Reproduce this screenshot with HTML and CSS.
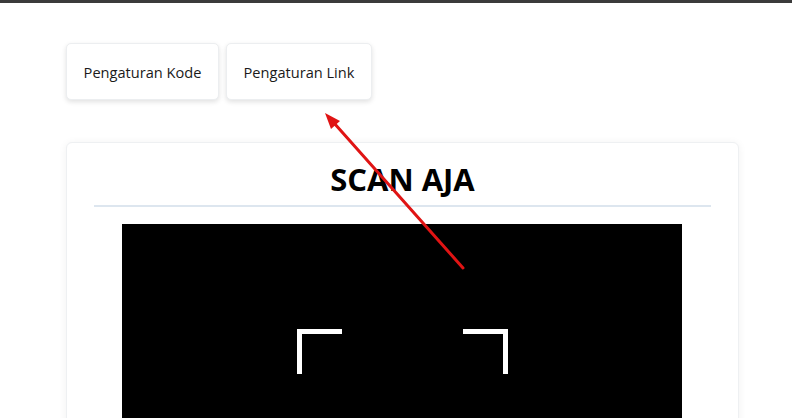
FILE: index.html
```html
<!DOCTYPE html>
<html>
<head>
<meta charset="utf-8">
<link rel="stylesheet" href="styles.css">
</head>
<body>
<div class="topbar"></div>
<main class="page">
  <nav class="tabs">
    <button class="tab">Pengaturan Kode</button>
    <button class="tab">Pengaturan Link</button>
  </nav>
  <section class="card">
    <h1 class="title">SCAN AJA</h1>
    <div class="scanner">
      <div class="qrbox">
        <span class="corner tl"></span>
        <span class="corner tr"></span>
      </div>
    </div>
  </section>
</main>
<svg class="annot" width="792" height="418" viewBox="0 0 792 418">
  <line x1="463" y1="268" x2="334" y2="123" stroke="#e01414" stroke-width="3" stroke-linecap="round"/>
  <polygon points="325,113 340,121 331,129" fill="#e01414"/>
</svg>
</body>
</html>
```
FILE: styles.css
```css
html, body { margin: 0; padding: 0; background: #fff; overflow: hidden; }
body { font-family: "Open Sans", "Noto Sans", sans-serif; color: #1a1a1a; width: 792px; height: 418px; position: relative; }
.topbar { height: 3px; background: #3b3b3b; }
.page { padding: 40px 0 0 66px; width: 673px; }
.tabs { display: flex; gap: 7px; }
.tab {
  font-family: "Open Sans", "Noto Sans", sans-serif;
  font-size: 14.6px; color: #1a1a1a;
  background: #fff; border: 1px solid #eceef0; border-radius: 5px;
  height: 57px; padding: 0 10px;
  box-shadow: 0 2px 5px rgba(0,0,0,0.12);
}
.tab:first-child { width: 153px; }
.tab:last-child { width: 146px; }
.card {
  margin-top: 42px; background: #fff; border-radius: 6px;
  border: 1px solid #eef0f2;
  box-shadow: 0 1px 8px rgba(0,0,0,0.06);
  padding: 0 27px 20px; height: 290px;
}
.title {
  margin: 0; padding: 20px 0 10px; text-align: center;
  font-size: 31px; font-weight: 700; color: #000; line-height: 32px;
  border-bottom: 2px solid #dde6ef;
}
.scanner { margin: 17px 0 0 28px; width: 560px; height: 220px; background: #000; position: relative; }
.qrbox { position: absolute; left: 175px; top: 105px; width: 211px; height: 80px; }
.corner { position: absolute; width: 40px; height: 40px; border: 0 solid #fff; }
.corner.tl { left: 0; top: 0; border-left-width: 5px; border-top-width: 5px; }
.corner.tr { right: 0; top: 0; border-right-width: 5px; border-top-width: 5px; }
.annot { position: absolute; left: 0; top: 0; pointer-events: none; }
```
